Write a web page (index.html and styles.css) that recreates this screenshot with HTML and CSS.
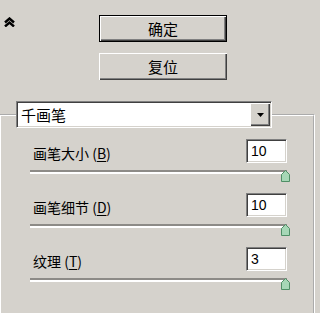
FILE: index.html
```html
<!DOCTYPE html>
<html lang="zh">
<head>
<meta charset="utf-8">
<link rel="stylesheet" href="styles.css">
</head>
<body>
<div class="top">
  <div class="collapse">
    <svg width="11" height="10" viewBox="0 0 11 10"><polyline points="1,5.5 5.5,1.5 10,5.5" fill="none" stroke="#000" stroke-width="2.4"/><polyline points="1,9.5 5.5,5.5 10,9.5" fill="none" stroke="#000" stroke-width="2.4"/></svg>
  </div>
  <div class="buttons">
    <div class="btn btn-default">确定</div>
    <div class="btn">复位</div>
  </div>
</div>
<fieldset class="group">
  <legend class="combo">
    <span class="combo-text">千画笔</span>
    <span class="combo-arrow"><svg width="7" height="4" viewBox="0 0 7 4"><polygon points="0,0 7,0 3.5,4" fill="#000"/></svg></span>
  </legend>
  <div class="row">
    <div class="line"><span class="label">画笔大小 (<u>B</u>)</span><span class="field">10</span></div>
    <div class="slider"><div class="track"></div><svg class="thumb" width="9" height="12" viewBox="0 0 9 12"><polygon points="4.5,0.5 8.5,4.5 8.5,11.5 0.5,11.5 0.5,4.5" fill="#a6d7b6" stroke="#4f8f66"/></svg></div>
  </div>
  <div class="row">
    <div class="line"><span class="label">画笔细节 (<u>D</u>)</span><span class="field">10</span></div>
    <div class="slider"><div class="track"></div><svg class="thumb" width="9" height="12" viewBox="0 0 9 12"><polygon points="4.5,0.5 8.5,4.5 8.5,11.5 0.5,11.5 0.5,4.5" fill="#a6d7b6" stroke="#4f8f66"/></svg></div>
  </div>
  <div class="row">
    <div class="line"><span class="label">纹理 (<u>T</u>)</span><span class="field">3</span></div>
    <div class="slider"><div class="track"></div><svg class="thumb" width="9" height="12" viewBox="0 0 9 12"><polygon points="4.5,0.5 8.5,4.5 8.5,11.5 0.5,11.5 0.5,4.5" fill="#a6d7b6" stroke="#4f8f66"/></svg></div>
  </div>
</fieldset>
</body>
</html>
```
FILE: styles.css
```css
html, body {
  margin: 0;
  padding: 0;
  background: #d5d2cc;
  overflow: hidden;
  width: 320px;
  height: 313px;
  font-family: "Noto Sans CJK SC", "Noto Sans", sans-serif;
  color: #000;
}
.top {
  display: grid;
  grid-template-columns: 99px 128px;
  padding-top: 15px;
}
.collapse {
  padding: 2px 0 0 4px;
}
.collapse svg { display: block; }
.buttons {
  display: flex;
  flex-direction: column;
  gap: 11px;
}
.btn {
  height: 27px;
  box-sizing: border-box;
  display: flex;
  align-items: center;
  justify-content: center;
  font-size: 15px;
  line-height: 1;
  background: #d5d2cc;
  box-shadow: inset 1px 1px #fff, inset -1px -1px #404040, inset -2px -2px #808080;
}
.btn-default {
  border: 1px solid #000;
  box-shadow: inset 1px 1px #fff, inset -1px -1px #404040, inset -2px -2px #808080;
}
.group {
  margin: 21px 5px 0 -1px;
  border: 2px groove #fff;
  padding: 0 26px 60px 15px;
  min-width: 0;
}
.combo {
  box-sizing: border-box;
  width: 256px;
  height: 27px;
  padding: 0;
  display: flex;
  align-items: stretch;
  background: #fff;
  border: 1px solid;
  border-color: #808080 #fff #fff #808080;
  box-shadow: inset 1px 1px #404040, inset -1px -1px #d5d2cc;
}
.combo-text {
  flex: 1;
  padding: 0 0 0 4px;
  font-size: 15px;
  line-height: 25px;
}
.combo-arrow {
  width: 20px;
  margin: 1px 1px 1px 0;
  box-sizing: border-box;
  display: flex;
  align-items: center;
  justify-content: center;
  background: #d5d2cc;
  box-shadow: inset 1px 1px #fff, inset -1px -1px #404040, inset -2px -2px #808080;
}
.combo-arrow svg { display: block; }
.row {
  margin-top: 10px;
  padding-left: 14px;
}
.row:first-of-type { margin-top: 11px; }
.line {
  display: flex;
  justify-content: space-between;
  align-items: center;
}
.label {
  margin-left: 3px;
  padding-top: 4px;
  font-size: 14px;
  line-height: 1;
}
.label u { text-underline-offset: 2px; }
.field {
  box-sizing: border-box;
  width: 41px;
  height: 24px;
  padding-left: 4px;
  display: flex;
  align-items: center;
  background: #fff;
  font-family: "Liberation Sans", Arial, sans-serif;
  font-size: 14px;
  border: 1px solid;
  border-color: #808080 #fff #fff #808080;
  box-shadow: inset 1px 1px #404040, inset -1px -1px #d5d2cc;
}
.slider {
  position: relative;
  height: 13px;
  margin-top: 7px;
}
.track {
  margin-top: 3px;
  border-top: 2px solid #8d8b87;
  border-bottom: 2px solid #fff;
}
.thumb {
  position: absolute;
  right: -3px;
  top: 0;
  display: block;
}
```
